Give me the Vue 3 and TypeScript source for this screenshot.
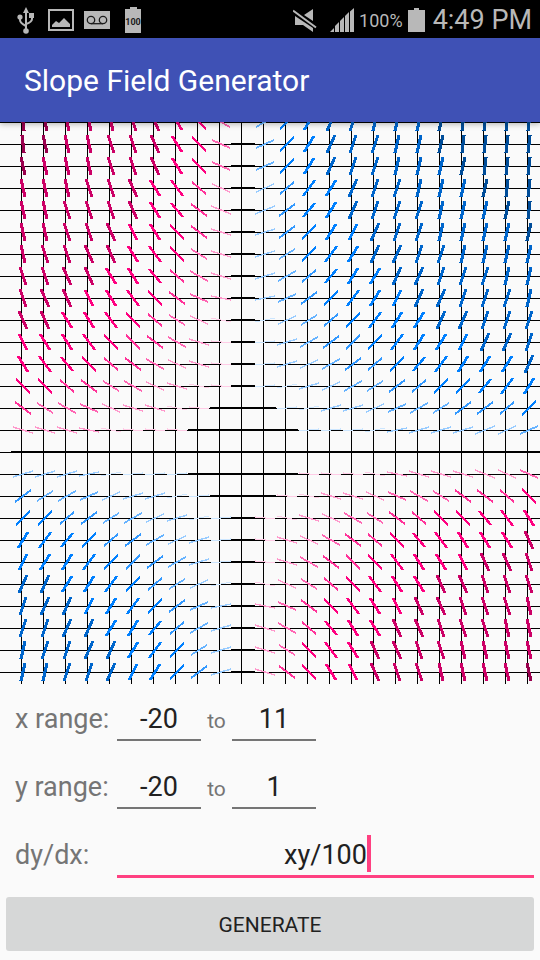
<script setup lang="ts">
import { computed, ref } from 'vue'

interface Tick {
  key: string
  points: string
  tone: string
}

const xMin = ref('-20')
const xMax = ref('11')
const yMin = ref('-20')
const yMax = ref('1')
const equation = ref('xy/100')

const CELL = 22
const COLS = 24
const ROWS = 26
const LEFT = 21
const BOTTOM = 550
const STEP = 2
const LIMITS = [0.1, 0.25, 0.5, 0.75, 1, 2, 5]
const WEIGHTS = [2, 1.1, 1.5, 2, 2.6, 3.2, 3.2, 3.2]

const origin = ref({ x: -20, y: -20 })

const columns = Array.from({ length: COLS }, (_, i) => LEFT + i * CELL)
const rows = Array.from({ length: ROWS }, (_, j) => BOTTOM - j * CELL)

function slopeAt(x: number, y: number): number {
  return (x * y) / 100
}

function levelOf(slope: number): number {
  return LIMITS.filter((limit) => Math.abs(slope) > limit).length
}

// Pen with a flat nib: shallow ticks are thickened vertically, steep ones horizontally.
function outline(cx: number, cy: number, dx: number, dy: number, weight: number): string {
  const steep = Math.abs(dy) > dx
  const ox = steep ? weight / 2 : 0
  const oy = steep ? 0 : weight / 2
  return [
    [cx - dx - ox, cy + dy - oy],
    [cx + dx - ox, cy - dy - oy],
    [cx + dx + ox, cy - dy + oy],
    [cx - dx + ox, cy + dy + oy],
  ]
    .map((p) => p.join(','))
    .join(' ')
}

const ticks = computed<Tick[]>(() => {
  const list: Tick[] = []
  rows.forEach((py, j) => {
    columns.forEach((px, i) => {
      const slope = slopeAt(origin.value.x + i * STEP, origin.value.y + j * STEP)
      const level = levelOf(slope)
      const angle = Math.atan(slope)
      const flatReach = slope === 0 ? 12 : 11
      const dx = level === 0 ? flatReach : Math.trunc(11 * Math.cos(angle))
      const dy = level === 0 ? 0 : Math.trunc(10 * Math.sin(angle))
      const tone = level === 0 ? 'flat' : (slope > 0 ? 'up' : 'down') + level
      list.push({ key: `${i}:${j}`, points: outline(px + 2, py, dx, dy, WEIGHTS[level]), tone })
    })
  })
  return list
})

function generate() {
  const x = Number(xMin.value)
  const y = Number(yMin.value)
  if (Number.isFinite(x) && Number.isFinite(y)) origin.value = { x, y }
}
</script>

<template>
  <div class="screen">
    <div class="status">
      <svg class="usb" viewBox="0 0 18 28" width="18" height="28">
        <path d="M9 4v20M3 10v3q0 3 6 6M15 8v4q0 3-6 5" fill="none" stroke="#b8b8b8" stroke-width="2" />
        <path d="M9 0l3 6H6zM12 6h5v5h-5z" fill="#b8b8b8" />
        <circle cx="3" cy="10" r="2.6" fill="#b8b8b8" />
        <circle cx="9" cy="24" r="2.8" fill="#b8b8b8" />
      </svg>
      <svg class="photo" viewBox="0 0 26 22" width="26" height="22">
        <rect x="1" y="1" width="24" height="20" fill="none" stroke="#b8b8b8" stroke-width="2" />
        <path d="M4 18v-2l4-4 3 2 5-5 6 6v3z" fill="#b8b8b8" />
      </svg>
      <svg class="voicemail" viewBox="0 0 26 18" width="26" height="18">
        <rect width="26" height="18" fill="#b8b8b8" />
        <g fill="none" stroke="#1c1c1c" stroke-width="1.3">
          <circle cx="7" cy="9" r="3.7" /><circle cx="19" cy="9" r="3.7" /><path d="M7 12.7h12" />
        </g>
      </svg>
      <svg class="charge" viewBox="0 0 16 26" width="16" height="26">
        <path d="M5 0h7v2h4v24H0V2h5z" fill="#b8b8b8" />
        <text x="8" y="18" text-anchor="middle">100</text>
      </svg>
      <span class="gap"></span>
      <svg class="mute" viewBox="0 0 24 24" width="24" height="24">
        <path d="M11 6l9-6v12zM2 7v9h8l10 7v-4z" fill="#b8b8b8" />
        <path d="M0 1.500l23 17" fill="none" stroke="#b8b8b8" stroke-width="2" />
      </svg>
      <svg class="signal" viewBox="0 0 24 24" width="24" height="24">
        <path d="M0 24l4-4v4zM5 24v-6l4-4v10zM10 24V13l4-4v15zM15 24V8l4-4v20zM20 24V3.500l4-3.500v24z" fill="#b8b8b8" />
      </svg>
      <span class="percent">100%</span>
      <svg class="battery" viewBox="0 0 17 24" width="17" height="24">
        <path d="M6 0h5v2h6v22H0V2h6z" fill="#b8b8b8" />
      </svg>
      <span class="clock">4:49 PM</span>
    </div>

    <header class="bar"><h1>Slope Field Generator</h1></header>

    <svg class="plot" viewBox="0 0 540 562" role="img" aria-label="Slope field">
      <path v-for="x in columns" :key="'c' + x" class="grid" :d="`M${x + 0.5} 0V562`" />
      <path v-for="y in rows" :key="'r' + y" class="grid" :d="`M0 ${y + 0.5}H540`" />
      <polygon v-for="t in ticks" :key="t.key" :class="t.tone" :points="t.points" />
    </svg>

    <form class="form" @submit.prevent="generate">
      <div class="row">
        <label class="name" for="x-min">x range:</label>
        <input id="x-min" v-model="xMin" class="short" type="text" />
        <label class="to" for="x-max">to</label>
        <input id="x-max" v-model="xMax" class="short" type="text" />
      </div>
      <div class="row">
        <label class="name" for="y-min">y range:</label>
        <input id="y-min" v-model="yMin" class="short" type="text" />
        <label class="to" for="y-max">to</label>
        <input id="y-max" v-model="yMax" class="short" type="text" />
      </div>
      <div class="row">
        <label class="name" for="equation">dy/dx:</label>
        <div class="wide">
          <input id="equation" v-model="equation" class="active" type="text" />
          <span class="caret"></span>
        </div>
      </div>
      <button type="submit">GENERATE</button>
    </form>
  </div>
</template>

<style>
body {
  background: #fafafa;
}
</style>

<style scoped>
.screen {
  font-family: Roboto, "Noto Sans", sans-serif;
  background: #fafafa;
  color: #212121;
}
.status {
  display: flex;
  align-items: center;
  box-sizing: border-box;
  height: 38px;
  padding: 2px 8px 0 17px;
  background: #000;
  color: #b8b8b8;
}
.status svg {
  flex: none;
}
.usb {
  margin-top: 2px;
}
.photo {
  margin-left: 13px;
}
.voicemail {
  margin-left: 10px;
}
.charge {
  margin-left: 15px;
}
.charge text {
  font-size: 9px;
  font-weight: 700;
  fill: #1c1c1c;
}
.gap {
  flex: 1;
}
.mute {
  margin-top: 2px;
}
.signal {
  margin-left: 13px;
  margin-right: 5px;
}
.percent {
  font-size: 18px;
}
.battery {
  margin-left: 5px;
}
.clock {
  margin-left: 8px;
  font-size: 27px;
}
.bar {
  position: relative;
  display: flex;
  align-items: center;
  height: 84px;
  padding: 0 24px;
  background: #3f51b5;
  color: #fff;
  box-shadow: 0 2px 6px rgba(0, 0, 0, 0.3);
}
h1 {
  margin: 0;
  font-size: 30px;
  font-weight: 400;
}
.plot {
  display: block;
  width: 100%;
  height: auto;
  shape-rendering: crispEdges;
}
.grid {
  stroke: #000;
  stroke-width: 1;
}
.flat {
  fill: #000;
}
.up1 {
  fill: #cce6ff;
}
.up2 {
  fill: #99ccff;
}
.up3 {
  fill: #66b3ff;
}
.up4 {
  fill: #3399ff;
}
.up5 {
  fill: #0080ff;
}
.up6 {
  fill: #0066cc;
}
.up7 {
  fill: #004d99;
}
.down1 {
  fill: #ffcce6;
}
.down2 {
  fill: #ff99cc;
}
.down3 {
  fill: #ff66b3;
}
.down4 {
  fill: #ff3399;
}
.down5 {
  fill: #ff0080;
}
.down6 {
  fill: #cc0066;
}
.down7 {
  fill: #99004d;
}
.form {
  display: flex;
  flex-direction: column;
}
.row {
  display: flex;
  align-items: flex-start;
  height: 68px;
  box-sizing: border-box;
  padding: 19px 6px 0 15px;
  font-size: 27px;
  line-height: 32px;
}
.name {
  width: 102px;
  flex: none;
  color: #757575;
  white-space: nowrap;
}
.to {
  width: 31px;
  padding-top: 2px;
  font-size: 21px;
  text-align: center;
  color: #757575;
}
input {
  box-sizing: content-box;
  height: 32px;
  margin: 0;
  padding: 0 0 4px;
  border: 0;
  border-bottom: 2px solid #757575;
  border-radius: 0;
  outline: 0;
  background: transparent;
  color: #212121;
  font: inherit;
  text-align: center;
}
.short {
  width: 84px;
}
.wide {
  position: relative;
  flex: 1;
}
.active {
  display: block;
  width: 100%;
  border-bottom: 3px solid #ff4081;
  caret-color: #ff4081;
}
.caret {
  position: absolute;
  top: -4px;
  left: calc(50% + 41px);
  width: 4px;
  height: 37px;
  background: #ff4081;
}
button {
  height: 54px;
  margin: 9px 6px;
  padding: 2px 0 0;
  border: 0;
  border-radius: 3px;
  background: #d6d7d7;
  color: #212121;
  font: inherit;
  font-size: 21px;
}
</style>
